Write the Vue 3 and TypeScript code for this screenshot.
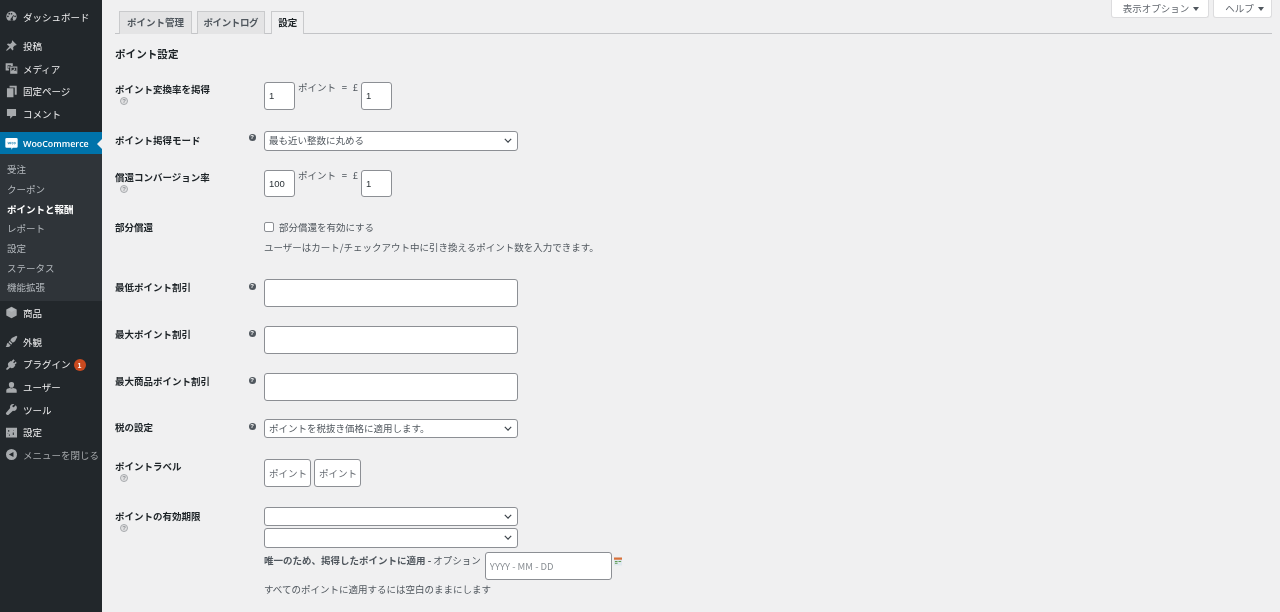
<script setup lang="ts">
const subItems = [
  { text: '受注' },
  { text: 'クーポン' },
  { text: 'ポイントと報酬', current: true },
  { text: 'レポート' },
  { text: '設定' },
  { text: 'ステータス' },
  { text: '機能拡張' },
]
</script>

<template>
  <div class="page">
    <aside class="side">
      <a class="item first">
        <svg class="ic" viewBox="0 0 20 20"><path d="M10 2a8 8 0 0 0-8 8c0 2.600 1.200 4.800 3 6.300h10c1.800-1.500 3-3.700 3-6.300a8 8 0 0 0-8-8zm-5.500 9a1.300 1.300 0 1 1 0-2.600 1.300 1.300 0 0 1 0 2.600zm2-4a1.300 1.300 0 1 1 0-2.600 1.300 1.300 0 0 1 0 2.600zM10 4.500a1.300 1.300 0 1 1 0 2.600 1.300 1.300 0 0 1 0-2.600zm1.600 8.300a2 2 0 1 1-2.200-.2L13 7.500l.8.500-2.200 4.800zm3.900-1.800a1.300 1.300 0 1 1 0-2.600 1.300 1.300 0 0 1 0 2.600z"/></svg>
        <span>ダッシュボード</span>
      </a>
      <a class="item sep">
        <svg class="ic" viewBox="0 0 20 20"><path d="M11 2l7 7-1.300 1-1.200-.5-3 3 .5 3.500-1.500 1.500-3.200-3.800L3 18l-1 0 0-1 4.800-5.300L3 8.500 4.500 7l3.500.5 3-3L10.500 3.300z"/></svg>
        <span>投稿</span>
      </a>
      <a class="item">
        <svg class="ic" viewBox="0 0 20 20"><path d="M1 2h11v4H9V5H4v5h2v3H1zM4.500 6.500h2.500V9H4.500zM8 7h11v11H8zm2 2v5l2.500-2.500 2 2 1-1 2 2V9zm4.500.8a1.200 1.200 0 1 1 0 2.400 1.200 1.200 0 0 1 0-2.400z"/></svg>
        <span>メディア</span>
      </a>
      <a class="item">
        <svg class="ic" viewBox="0 0 20 20"><path d="M7 1h11v14h-3V4H7zM3 5h10v14H3z"/></svg>
        <span>固定ページ</span>
      </a>
      <a class="item">
        <svg class="ic" viewBox="0 0 20 20"><path d="M3 3h14v11h-5l-4 4v-4H3z"/></svg>
        <span>コメント</span>
      </a>
      <a class="item woo">
        <svg class="ic woo-ic" viewBox="0 0 20 20"><path d="M2.500 1.500h15a2 2 0 0 1 2 2v11a2 2 0 0 1-2 2h-5.500l-2.500 3 .5-3H2.500a2 2 0 0 1-2-2v-11a2 2 0 0 1 2-2z" fill="#fff"/><path d="M4.500 7.500l.9 3.500 1.400-2.800 1.200 2.800.8-3.500M11.500 8.400a1.100 1.100 0 1 0 .01 0M15 8.400a1.100 1.100 0 1 0 .01 0" fill="none" stroke="#0073aa" stroke-width=".9"/></svg>
        <span>WooCommerce</span>
        <i class="arrow"></i>
      </a>
      <div class="sub">
        <a v-for="s in subItems" :key="s.text" class="sub-item" :class="{ current: s.current }">{{ s.text }}</a>
      </div>
      <a class="item">
        <svg class="ic" viewBox="0 0 20 20"><path d="M10 1l8 4.200v9.600L10 19l-8-4.200V5.200z"/><path d="M10 2.500l6.500 3.400L10 9.300 3.500 5.900z" fill="#bfc3c7" opacity=".5"/></svg>
        <span>商品</span>
      </a>
      <a class="item sep looks">
        <svg class="ic" viewBox="0 0 20 20"><path d="M19 2.500L17.500 1 10.500 4.500 8 8l4 4 3.500-2.500zM7 9l4 4-1.500 2L5.500 11zM4.500 12l4 4c-1.500 2-4.500 3-7.500 2 2-1.200 1.500-3.500 2-4.500.3-.6.800-1.200 1.500-1.500z"/></svg>
        <span>外観</span>
      </a>
      <a class="item">
        <svg class="ic" viewBox="0 0 20 20"><path d="M13 2l2 2-2.500 2.500 1.500 1.500L16.500 5.500l1.500 2-3 3 1 1-3 3.500c-2 1-3.800.7-5-.5L4 18l-2-.1V16l3.500-3.500c-1.200-1.500-1.300-3.300-.5-5L8.500 4.500l1 1z"/></svg>
        <span>プラグイン</span>
        <b class="badge">1</b>
      </a>
      <a class="item">
        <svg class="ic" viewBox="0 0 20 20"><path d="M10 1.500a4 4 0 0 1 4 4.500c-.2 2.200-1.400 4.500-4 4.500S6.200 8.200 6 6a4 4 0 0 1 4-4.500zM2 18v-3.500c0-1.500 1-2.200 2.500-2.800l3-.9c1.500 1 3.500 1 5 0l3 .9c1.500.6 2.500 1.300 2.500 2.800V18z"/></svg>
        <span>ユーザー</span>
      </a>
      <a class="item">
        <svg class="ic" viewBox="0 0 20 20"><path d="M16.500 3.500l-3 3-1.800-.4L11.300 4.300l3-2.500c-2-.7-4.300-.2-5.500 1.300-1.100 1.200-1.300 3.200-.8 4.700L2 14.500c-.8.800-.8 2 0 2.800l.7.700c.8.800 2 .8 2.800 0l6.700-6c1.500.5 3.500.1 4.700-1.200 1.300-1.500 1.800-3.600 1-5.400z"/></svg>
        <span>ツール</span>
      </a>
      <a class="item">
        <svg class="ic" viewBox="0 0 20 20"><path fill-rule="evenodd" d="M1.500 2.500h17v15h-17zM5 6v3h1.500V6zM12.500 6v1h1V6zM4 11v1h1v-1zM12 10v4h1.500v-4zM6 13v2h1.500v-2z"/></svg>
        <span>設定</span>
      </a>
      <a class="item collapse">
        <svg class="ic" viewBox="0 0 20 20"><path fill-rule="evenodd" d="M10 1.500a8.500 8.500 0 1 1 0 17 8.500 8.500 0 0 1 0-17zm3 4.500l-7 4 7 4z"/></svg>
        <span>メニューを閉じる</span>
      </a>
    </aside>

    <main class="main">
      <header class="head">
        <nav class="tabs">
          <a class="tab first-tab">ポイント管理</a>
          <a class="tab tight">ポイントログ</a>
          <a class="tab on">設定</a>
        </nav>
        <div class="meta">
          <button class="meta-btn" type="button">表示オプション <i class="caret"></i></button>
          <button class="meta-btn" type="button">ヘルプ <i class="caret"></i></button>
        </div>
      </header>

      <h2 class="title">ポイント設定</h2>

      <section class="row r1">
        <div class="lab"><label>ポイント変換率を掲得</label><i class="q">?</i></div>
        <div class="field inline">
          <input class="in num" value="1" />
          <span class="ratio">ポイント &nbsp;=&nbsp; £</span>
          <input class="in num" value="1" />
        </div>
      </section>

      <section class="row r2">
        <div class="lab"><label>ポイント掲得モード</label><i class="tip">?</i></div>
        <div class="field">
          <select class="sel"><option>最も近い整数に丸める</option></select>
        </div>
      </section>

      <section class="row r3">
        <div class="lab"><label>償還コンバージョン率</label><i class="q">?</i></div>
        <div class="field inline">
          <input class="in num" value="100" />
          <span class="ratio">ポイント &nbsp;=&nbsp; £</span>
          <input class="in num" value="1" />
        </div>
      </section>

      <section class="row r4">
        <div class="lab"><label>部分償還</label></div>
        <div class="field">
          <label class="check"><input type="checkbox" class="cb" /> 部分償還を有効にする</label>
          <p class="desc">ユーザーはカート/チェックアウト中に引き換えるポイント数を入力できます。</p>
        </div>
      </section>

      <section class="row r5">
        <div class="lab"><label>最低ポイント割引</label><i class="tip">?</i></div>
        <div class="field"><input class="in wide" /></div>
      </section>

      <section class="row r5">
        <div class="lab"><label>最大ポイント割引</label><i class="tip">?</i></div>
        <div class="field"><input class="in wide" /></div>
      </section>

      <section class="row r5">
        <div class="lab"><label>最大商品ポイント割引</label><i class="tip">?</i></div>
        <div class="field"><input class="in wide" /></div>
      </section>

      <section class="row r8">
        <div class="lab"><label>税の設定</label><i class="tip">?</i></div>
        <div class="field">
          <select class="sel"><option>ポイントを税抜き価格に適用します。</option></select>
        </div>
      </section>

      <section class="row r9">
        <div class="lab"><label>ポイントラベル</label><i class="q">?</i></div>
        <div class="field inline two">
          <input class="in label-in" value="ポイント" />
          <input class="in label-in" value="ポイント" />
        </div>
      </section>

      <section class="row r10">
        <div class="lab"><label>ポイントの有効期限</label><i class="q">?</i></div>
        <div class="field">
          <select class="sel"></select>
          <select class="sel second"></select>
          <div class="opt">
            <strong>唯一のため、掲得したポイントに適用 - </strong><span>オプション</span>
            <input class="in date" placeholder="YYYY - MM - DD" />
            <svg class="cal" viewBox="0 0 9 9"><rect width="9" height="9" fill="#dfe8ee"/><rect width="9" height="2.500" fill="#d9713a"/><path d="M1 4h3v1H1zm4 0h3v1H5zM1 6h3v1H1z" fill="#5f9a54"/></svg>
          </div>
          <p class="desc last">すべてのポイントに適用するには空白のままにします</p>
        </div>
      </section>
    </main>
  </div>
</template>

<style>
html, body { margin: 0; background: #f0f0f1; }
</style>

<style scoped>
.page {
  display: flex;
  height: 612px;
  overflow: hidden;
  font-family: "Noto Sans CJK JP", "Liberation Sans", sans-serif;
  font-size: 9.5px;
  color: #50575e;
  background: #f0f0f1;
  filter: blur(0.3px);
}
.side {
  width: 102px;
  flex: none;
  display: flex;
  flex-direction: column;
  background: #22272b;
  color: #f0f0f1;
}
.item {
  position: relative;
  display: flex;
  align-items: center;
  height: 22.6px;
  flex: none;
  padding-left: 5px;
  white-space: nowrap;
}
.item span { margin-left: 5px; }
.first { margin-top: 5.7px; }
.sep { margin-top: 6.4px; }
.ic { width: 13px; height: 13px; flex: none; fill: #a7aaad; }
.woo {
  margin-top: 6.7px;
  background: #0073aa;
  color: #fff;
}
.woo span { font-family: "Open Sans", sans-serif; font-weight: 600; font-size: 8.9px; }
.woo-ic { fill: #fff; }
.arrow {
  position: absolute;
  right: 0;
  top: 7px;
  border: 5px solid transparent;
  border-right-color: #f0f0f1;
  border-left-width: 0;
}
.sub {
  display: flex;
  flex-direction: column;
  padding-top: 6px;
  background: #2f3439;
  height: 147px;
  box-sizing: border-box;
  flex: none;
}
.sub-item {
  height: 19.7px;
  line-height: 19.7px;
  flex: none;
  padding-left: 7px;
  color: #b4b9be;
}
.sub-item.current { color: #fff; font-weight: 700; }
.looks { margin-top: 6.6px; }
.badge {
  margin-left: 3px;
  width: 12px;
  height: 12px;
  margin-top: 2px;
  border-radius: 50%;
  background: #ca4a1f;
  color: #fff;
  font-size: 7px;
  line-height: 14px;
  text-align: center;
  font-family: "Liberation Sans", sans-serif;
}
.collapse { color: #a7aaad; }

.main {
  flex: 1;
  min-width: 0;
  padding: 0 8px 0 13px;
}
.head {
  display: flex;
  justify-content: space-between;
  align-items: flex-start;
  height: 34px;
  box-sizing: border-box;
  border-bottom: 1px solid #c3c4c7;
}
.tabs {
  display: flex;
  margin: 11px 0 0 4px;
}
.tab {
  height: 23px;
  line-height: 21px;
  box-sizing: border-box;
  padding: 0 7px;
  margin-right: 5px;
  background: #e4e4e5;
  border: 1px solid #c9cacc;
  border-bottom: none;
  color: #50575e;
  font-weight: 700;
  font-size: 9.5px;
  white-space: nowrap;
}
.first-tab { margin-right: 4.5px; }
.tab.tight { letter-spacing: -0.4px; padding: 0 6px; margin-right: 6px; }
.tab.on {
  padding: 0 6px;
  background: #f0f0f1;
  color: #1d2327;
}
.meta { display: flex; gap: 4px; }
.meta-btn {
  height: 18px;
  padding: 0 7px 2px 11px;
  border: 1px solid #dcdcde;
  border-top: none;
  border-radius: 0 0 3px 3px;
  background: #fff;
  color: #646970;
  font: inherit;
  white-space: nowrap;
}
.meta-btn:first-child { padding-right: 9px; }
.caret {
  display: inline-block;
  margin-left: 2px;
  vertical-align: middle;
  border: 3px solid transparent;
  border-top: 4px solid #50575e;
  border-bottom-width: 0;
}
.title {
  margin: 12px 0 0;
  height: 16px;
  line-height: 16px;
  font-size: 10.6px;
  font-weight: 700;
  color: #1d2327;
}
.row { display: flex; align-items: flex-start; }
.lab {
  width: 149px;
  flex: none;
  position: relative;
  color: #1d2327;
  font-weight: 700;
  line-height: 14px;
}
.lab label { display: block; }
.field { flex: 1; min-width: 0; }
.inline { display: flex; align-items: flex-start; }
.q {
  display: block;
  width: 8px;
  height: 8px;
  margin: 1px 0 0 5px;
  border: 1px solid #a7aaad;
  border-radius: 50%;
  box-sizing: border-box;
  background: #e2e2e3;
  color: #8c8f94;
  font: 700 6px/6px "Liberation Sans", sans-serif;
  text-align: center;
}
.tip {
  position: absolute;
  left: 133.5px;
  top: 0;
  width: 7px;
  height: 7px;
  margin-top: 3px;
  border-radius: 50%;
  background: #50575e;
  color: #fff;
  font: 700 6px/7px "Liberation Sans", sans-serif;
  text-align: center;
}
.in {
  display: block;
  box-sizing: border-box;
  border: 1px solid #8c8f94;
  border-radius: 3px;
  background: #fff;
  outline: none;
  padding: 0 4px;
  font: inherit;
  color: #2c3338;
}
.in::placeholder { color: #8a8f94; opacity: 1; }
.num { width: 31px; height: 27.500px; flex: none; font-family: "Liberation Sans", sans-serif; }
.ratio { margin: -1px 3px 0 3px; line-height: 12px; white-space: nowrap; word-spacing: 0.75px; }
.wide { width: 254px; height: 27.500px; }
.sel {
  display: block;
  width: 254px;
  height: 19.500px;
  box-sizing: border-box;
  appearance: none;
  border: 1px solid #8c8f94;
  border-radius: 3px;
  padding: 0 16px 1px 4px;
  font: inherit;
  color: #50575e;
  background: #fff url("data:image/svg+xml,%3Csvg xmlns='http://www.w3.org/2000/svg' viewBox='0 0 10 6'%3E%3Cpath d='M1 1l4 4 4-4' fill='none' stroke='%233c434a' stroke-width='1.500'/%3E%3C/svg%3E") no-repeat right 5px center / 8px 5px;
  outline: none;
}
.second { margin-top: 2px; }
.r1 { margin-top: 20px; }
.r2 { margin-top: 21.500px; }
.r2 .lab { line-height: 19px; }
.r3 { margin-top: 19px; }
.r4 { margin-top: 23px; }
.check { display: flex; align-items: center; line-height: 14px; }
.cb {
  appearance: none;
  width: 10px;
  height: 10px;
  margin: 0 5px 0 0;
  border: 1px solid #8c8f94;
  border-radius: 2px;
  background: #fff;
}
.desc { margin: 6px 0 0; line-height: 14px; }
.r5 { margin-top: 19.500px; }
.r4 + .r5 { margin-top: 25px; }
.r5 .lab { padding-top: 1px; }
.r5 .tip { top: 1px; }
.r8 { margin-top: 18px; }
.r8 .lab { line-height: 16px; }
.r8 .tip { top: 1px; }
.r9 { margin-top: 21px; }
.two { gap: 3px; }
.label-in { width: 47px; height: 27.500px; color: #646970; }
.r10 { margin-top: 20px; }
.r10 .lab { padding-top: 2px; }
.opt {
  display: flex;
  align-items: flex-start;
  margin-top: 4.500px;
  line-height: 16px;
  white-space: nowrap;
}
.opt strong { font-weight: 700; white-space: pre; }
.date { width: 127px; height: 28px; margin-left: 4px; }
.cal { width: 8px; height: 9px; margin: 5px 0 0 2px; flex: none; }
.last { margin-top: 2px; }
</style>
